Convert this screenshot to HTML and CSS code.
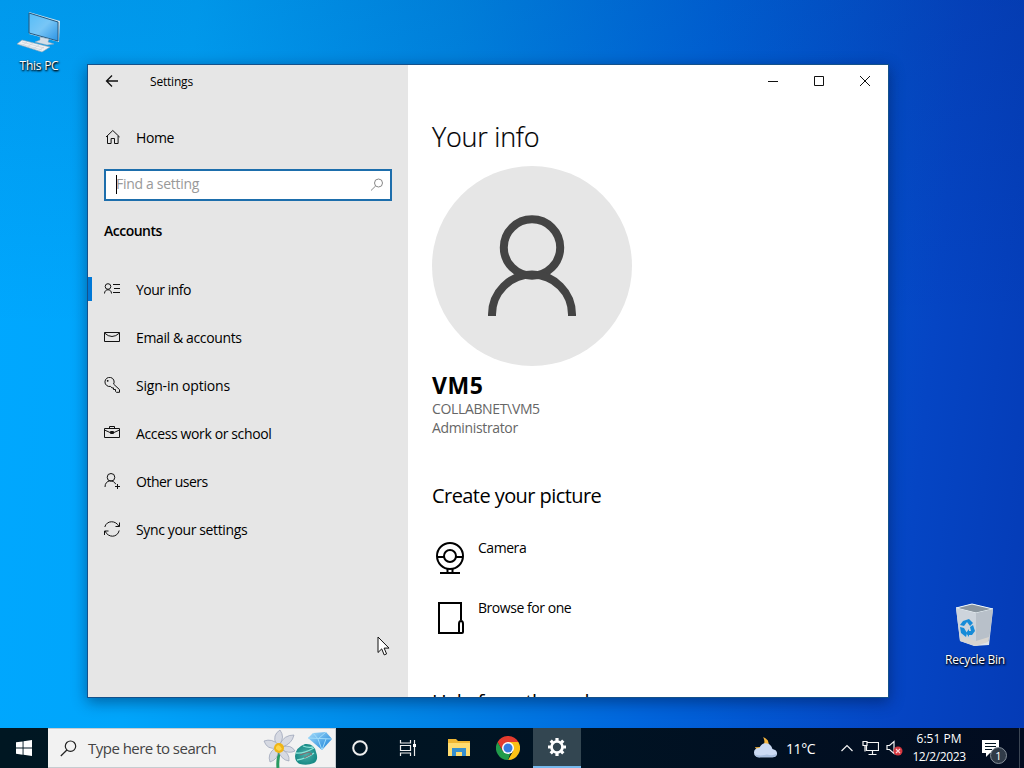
FILE: index.html
```html
<!DOCTYPE html>
<html lang="en">
<head>
<meta charset="utf-8">
<title>Settings</title>
<link rel="stylesheet" href="styles.css">
</head>
<body>
<main class="desktop">
  <div class="shortcut shortcut-pc">
    <svg width="44" height="44" viewBox="0 0 44 44">
      <defs><linearGradient id="screen" x1="0" y1="0" x2="1" y2="1"><stop offset="0" stop-color="#55bdf8"/><stop offset=".5" stop-color="#78c6f6"/><stop offset="1" stop-color="#2b93e4"/></linearGradient></defs>
      <path d="M12 2l31 9-1 21-30-8z" fill="#cfe3ef"/>
      <path d="M12 3l29 9v19l-29-8z" fill="url(#screen)" stroke="#24577c"/>
      <path d="M23 27l9 2-1 3 6 2-7 1-12-3 5-2z" fill="#d5dfe8" stroke="#8ca3b6" stroke-width=".5"/>
      <path d="M5 30l28 7-8 5-25-8z" fill="#edf0f4" stroke="#8fa5b5" stroke-width=".6"/>
      <path d="M5 32l22 6M3 34l22 6M10 32l-5 4M16 33l-6 4M22 35l-6 4M27 37l-6 4" stroke="#c4ccd4" stroke-width=".6"/>
    </svg>
    <span>This PC</span>
  </div>
  <div class="shortcut shortcut-bin">
    <svg width="40" height="44" viewBox="0 0 40 44">
      <path d="M1 5l16-4 21 5-4 36-15 1-14-5z" fill="#dfe4e9"/>
      <path d="M1 5l20 5 17-4-21-5z" fill="#8b969f" stroke="#eff7fb"/>
      <path d="M21 10l17-4-4 32-13 4z" fill="#b8c0c9"/><path d="M1 5l20 5v33L5 38z" fill="#cdd4dc"/>
      <path d="M5 33l16 5 13-4-1 5-12 4-15-5z" fill="#d8d5d0"/>
      <g fill="#168bd8"><path d="M8 18l6-2 4 4-3 3-3-4-3 4-4-1z"/><path d="M5 24l4 1 3 5-1 4-5-4z"/><path d="M18 22l2 6-3 4h-3v2l-3-4 3-4v2h2l-1-4z"/></g>
    </svg>
    <span>Recycle Bin</span>
  </div>

  <section class="window">
    <aside class="sidebar">
      <header class="side-title">
        <svg width="16" height="16" viewBox="0 0 16 16"><path d="M14 8H2.5M8 2.5L2.5 8 8 13.5" class="line arrow"/></svg>
        <span>Settings</span>
      </header>
      <div class="nav-item home">
        <svg width="16" height="16" viewBox="0 0 16 16"><path d="M2 8l6.8-6.5L15.6 8M3.5 7v7.5h3.6v-5h3.4v5h3.6V7" class="line"/></svg>
        <span>Home</span>
      </div>
      <div class="search"><i class="caret"></i><span>Find a setting</span>
        <svg width="14" height="14" viewBox="0 0 14 14"><circle cx="8.5" cy="5" r="4" class="line muted"/><path d="M5.6 8L1 12.5" class="line muted"/></svg>
      </div>
      <h2>Accounts</h2>
      <nav>
        <div class="nav-item selected">
          <svg width="16" height="16" viewBox="0 0 16 16"><circle cx="4" cy="5.5" r="2.8" class="line"/><path d="M.5 12.5c0-5 7-5 7 0M9 3.5h7M10 7.5h6M9 11.5h7" class="line"/></svg>
          <span class="tight">Your info</span></div>
        <div class="nav-item">
          <svg width="16" height="16" viewBox="0 0 16 16"><path d="M.5 3.5h15v9H.5zM.5 4Q8 11 15.5 4" class="line"/></svg>
          <span>Email &amp; accounts</span></div>
        <div class="nav-item">
          <svg width="16" height="16" viewBox="0 0 16 16"><path d="M9.6 7.1A4.6 4.6 0 1 0 6.6 9.4l1.3 1.5h1.6v1.6h2v1.9l1 .9h3v-2.7z" class="line"/><circle cx="3.7" cy="3.8" r=".9"/></svg>
          <span class="loose">Sign-in options</span></div>
        <div class="nav-item">
          <svg width="16" height="16" viewBox="0 0 16 16"><path d="M.5 3.5h15v9H.5zM5.5 3.5v-2h5v2M.5 5l5.5 2.5h4L15.5 5M6.5 6.5h3v2h-3z" class="line"/></svg>
          <span>Access work or school</span></div>
        <div class="nav-item">
          <svg width="16" height="16" viewBox="0 0 16 16"><circle cx="7" cy="4.3" r="3.8" class="line"/><path d="M1 14c0-7.8 9-7.5 10.7-2.8M13.5 11v5M11 13.5h5" class="line"/></svg>
          <span class="tight">Other users</span></div>
        <div class="nav-item">
          <svg width="16" height="16" viewBox="0 0 16 16"><path d="M.8 6C2.5-.8 12-1 15 5.5M15.5 1.5v4h-4M15.2 9.5C13.5 17 4 17 1 10M.5 14v-4h4" class="line"/></svg>
          <span>Sync your settings</span></div>
      </nav>
    </aside>
    <article class="content">
      <div class="controls">
        <svg width="46" height="32" viewBox="0 0 46 32"><path d="M18 16.5h10" class="line"/></svg>
        <svg width="46" height="32" viewBox="0 0 46 32"><path d="M18.5 11.5h9v9h-9z" class="line"/></svg>
        <svg width="46" height="32" viewBox="0 0 46 32"><path d="M18 11l10 10M28 11L18 21" class="line"/></svg>
      </div>
      <h1>Your info</h1>
      <svg class="avatar" width="200" height="200" viewBox="0 0 200 200"><circle cx="100" cy="100" r="100" fill="#e6e6e6"/><circle cx="100" cy="81.5" r="28.2" fill="none" stroke="#444" stroke-width="8"/><path d="M60 150v-1.5a40 40 0 0 1 80 0v1.5" fill="none" stroke="#444" stroke-width="8"/></svg>
      <div class="user">VM5</div>
      <div class="detail">COLLABNET\VM5</div>
      <div class="detail">Administrator</div>
      <h3>Create your picture</h3>
      <div class="action">
        <svg width="36" height="36" viewBox="0 0 36 36" class="bold"><circle cx="18" cy="16" r="13"/><circle cx="18" cy="16" r="6"/><path d="M5 17h7M24 17h7M15.5 28.5v4M20.5 28.5v4M8 33h20"/></svg>
        <span>Camera</span>
      </div>
      <div class="action">
        <svg width="36" height="36" viewBox="0 0 36 36" class="bold"><path d="M29 20V3H7v30h23a1 1 0 0 0 1-1V24c0-4-4-4-4 0v9"/></svg>
        <span>Browse for one</span>
      </div>
      <h3 class="help">Help from the web</h3>
    </article>
  </section>

  <svg class="pointer" width="13" height="20" viewBox="0 0 13 20"><path d="M1 1v15.5l3.7-3.6 2.5 6 2.4-1-2.5-5.8H12z" fill="#fff" stroke="#111"/></svg>
</main>

<footer class="taskbar">
  <div class="start"><svg width="16" height="16" viewBox="0 0 16 16"><path d="M0 2.3l6.6-.9v6.2H0zM7.5 1.2L16 0v7.6H7.5zM0 8.5h6.6v6.2L0 13.8zM7.5 8.5H16V16l-8.5-1.2z" fill="#fff"/></svg></div>
  <div class="task-search">
    <svg width="17" height="17" viewBox="0 0 17 17"><circle cx="10.5" cy="6.2" r="5.2" class="search-line"/><path d="M6.9 10L.8 16" class="search-line"/></svg>
    <span>Type here to search</span>
    <svg class="doodle" width="72" height="40" viewBox="0 0 72 40">
      <defs>
        <linearGradient id="gem" x1="0" y1="0" x2="1" y2="1"><stop offset="0" stop-color="#a5dcfa"/><stop offset="1" stop-color="#147fd8"/></linearGradient>
        <radialGradient id="stone"><stop offset="0" stop-color="#4caea9"/><stop offset="1" stop-color="#188b86"/></radialGradient>
      </defs>
      <path d="M16 22c0 7-2 11-1 18" fill="none" stroke="#299a61" stroke-width="3"/>
      <g fill="#d6d9e2" stroke="#969fb5" stroke-width=".7"><path d="M13 16Q9 7 17 2q5 7 0 14z"/><path d="M17 16Q21 7 31 7q-2 9-12 12z"/><path d="M19 19q9-3 13 4-6 3-13-1z"/><path d="M18 21q9 4 8 12-8-1-11-11z"/><path d="M15 22q1 9-8 12-3-8 5-14z"/><path d="M14 20Q4 22 1 13q8-3 15 4z"/></g>
      <circle cx="16" cy="20" r="5" fill="#efb516"/><path d="M13 19l2-2 2 1 2 3-3 2-3-2z" fill="#ffd54a"/>
      <path d="M32 28q1-9 10-12 9-1 11 8 3 8-2 11-7 3-14 1-5-2-5-8z" fill="url(#stone)"/>
      <path d="M33 25q7 1 18-5M34 32q9-1 17-7M40 18q5 2 10 1" fill="none" stroke="#8de3d9" stroke-width="1.3"/><path d="M37 27l9-3 3 2-8 4" fill="none" stroke="#846d70"/>
      <path d="M45 10l5-5 13-1 6 7-10 11z" fill="url(#gem)"/><path d="M45 10l24 1M50 5l5 6 8-7M55 11l4 11 4-11" fill="none" stroke="#a0dcfa"/>
    </svg>
  </div>
  <div class="task"><svg width="18" height="18" viewBox="0 0 18 18"><circle cx="9" cy="9" r="6.8" fill="none" stroke="#eee" stroke-width="2"/></svg></div>
  <div class="task"><svg width="18" height="16" viewBox="0 0 18 16"><path d="M1.5 0v3h10V0M1.5 16v-3h10v3M1.5 5.5h10v5h-10zM15.5 0v16" fill="none" stroke="#eee" stroke-width="1.2"/><path d="M14 4h3v3h-3z" fill="#fff"/></svg></div>
  <div class="task explorer"><svg width="22" height="20" viewBox="0 0 22 20"><path d="M0 1h8l2 2h12v14H0z" fill="#efb633"/><path d="M0 5h22v13H0z" fill="#ffdc70"/><path d="M4 18v-8h14v8h-4v-4H8v4z" fill="#368fce"/></svg></div>
  <div class="task chrome"><svg width="24" height="24" viewBox="0 0 24 24"><path d="M22.4 6A12 12 0 0 1 12 24l5.2-9L12 6z" fill="#fbc116"/><path d="M12 24A12 12 0 0 1 1.6 6l5.2 9 5.2 3 2.5-1z" fill="#219b4b"/><path d="M1.6 6A12 12 0 0 1 22.4 6H12v6l-5.2 3z" fill="#e33b2e"/><circle cx="12" cy="12" r="6" fill="#fff"/><circle cx="12" cy="12" r="4.5" fill="#377bdf"/></svg></div>
  <div class="task active"><svg width="20" height="20" viewBox="-10 -10 20 20"><circle r="5.5" fill="none" stroke="#fff" stroke-width="2.7"/><g stroke="#fff" stroke-width="3.2"><path d="M0-6v-3M0 6v3M-6 0h-3M6 0h3M4.3-4.3l2-2M4.3 4.3l2 2M-4.3 4.3l-2 2M-4.3-4.3l-2-2"/></g></svg></div>
  <div class="tray">
    <svg class="weather" width="24" height="24" viewBox="0 0 26 24"><path d="M10 0q5 12-9 11 3 6 10 4 7-4 4-11-2-3-5-4z" fill="#f6b63f"/><path d="M6 22q-6 0-6-5t6-5q2-6 8-5 4 0 6 6 5 1 5 5t-5 4z" fill="#cbdaf3"/><path d="M1 19q1 4 6 3h13q4 0 5-4-5 3-11 1-7 2-13 0z" fill="#a9bfdf"/></svg>
    <span class="temp">11°C</span>
    <svg class="chevron" width="12" height="8" viewBox="0 0 12 8"><path d="M.5 7L6 1.5 11.5 7" class="white-line"/></svg>
    <svg class="network" width="17" height="15" viewBox="0 0 17 15"><path d="M5.5 1.5h11v8h-12V5M10.5 9.5v4M6.5 13.5h8M1 .5h4v4H1zM3 4.5v6" class="white-line"/></svg>
    <svg class="sound" width="17" height="16" viewBox="0 0 17 16"><path d="M1 5.5h2.5L8 1.5v12l-4.5-4H1z" class="white-line"/><circle cx="12" cy="11" r="4.5" fill="#d63840"/><path d="M10 9l4 4M14 9l-4 4" stroke="#ffd3d5" stroke-width="1.2"/></svg>
    <div class="clock"><span>6:51 PM</span><span class="date">12/2/2023</span></div>
    <div class="notice"><svg width="17" height="17" viewBox="0 0 17 17"><path d="M0 0h17v13H8l-4 4v-4H0z" fill="#fff"/><path d="M3 3.5h11M3 6.5h11M3 9.5h7" stroke="#001320"/></svg><b>1</b></div>
    <i class="peek"></i>
  </div>
</footer>
</body>
</html>
```
FILE: styles.css
```css
* { box-sizing: border-box; }
body { margin: 0; width: 1024px; height: 768px; overflow: hidden; font-family: "Open Sans", "Noto Sans", sans-serif; font-size: 14px; color: #000; }
svg { display: block; flex: none; }
h1, h2, h3 { margin: 0; font-weight: 400; }
span { white-space: nowrap; }
.desktop { position: relative; height: 728px; overflow: hidden; background: linear-gradient(180deg, rgba(0,20,70,.1), transparent 45%), linear-gradient(96deg, #00a8ff 0%, #00a5fb 18%, #0089e8 42%, #0065dc 65%, #0545c4 88%, #053bb6 100%); }
.shortcut { position: absolute; display: flex; flex-direction: column; align-items: center; width: 76px; color: #fff; font-size: 12px; line-height: 16px; letter-spacing: -.25px; text-shadow: 1px 1px 2px #000, 0 1px 2px #000; }
.shortcut-pc { left: 1px; top: 10px; gap: 4px; }
.shortcut-bin { left: 937px; top: 603px; gap: 5px; }
.window { position: absolute; left: 87px; top: 64px; width: 802px; height: 634px; display: flex; overflow: hidden; border: 1px solid #14518b; box-shadow: 0 4px 14px rgba(0,15,50,.45); background: #fff; }
.sidebar { width: 320px; background: #e6e6e6; flex: none; }
.side-title { height: 32px; display: flex; align-items: center; padding-left: 16px; gap: 30px; font-size: 12px; letter-spacing: -.2px; }
.nav-item { height: 48px; display: flex; align-items: center; padding-left: 16px; gap: 16px; letter-spacing: -.37px; }
.nav-item svg { margin-bottom: 2px; }
.nav-item span { margin-bottom: 2px; }
.nav-item .tight { letter-spacing: -.5px; }
.nav-item .loose { letter-spacing: -.2px; }
.home { margin-top: 17px; }
.selected { background: linear-gradient(#0078d7, #0078d7) 0 11px / 4px 24px no-repeat; }
.search { margin: 7px 16px 0; height: 32px; border: 2px solid #1d6eac; background: #fff; display: flex; align-items: center; padding: 0 6px 2px 10px; color: #999; letter-spacing: -.3px; }
.search span { margin-bottom: 1px; }
.search svg { margin: 2px 0 0 auto; }
.caret { width: 1px; height: 19px; margin-right: -1px; background: #000; }
.sidebar h2 { font-size: 14px; font-weight: 600; line-height: 24px; letter-spacing: -.5px; margin: 18px 16px 23px; }
.line { fill: none; stroke: #111; stroke-width: 1; }
.arrow { stroke-width: 1.3; }
.muted { stroke: #888; }
.content { flex: 1; }
.content > :not(.controls) { margin-left: 24px; }
.controls { display: flex; height: 32px; justify-content: flex-end; }
.content h1 { font-size: 27px; font-weight: 300; line-height: 36px; letter-spacing: -.25px; margin-top: 22px; -webkit-text-stroke: .2px #000; }
.avatar { margin-top: 11px; }
.user { font-size: 23px; line-height: 29px; font-weight: 700; letter-spacing: .5px; margin-top: 5px; }
.detail { line-height: 19px; color: #666; letter-spacing: -.35px; position: relative; top: -1px; }
.content h3 { font-size: 20px; line-height: 28px; letter-spacing: -.57px; margin-top: 44px; }
.action { display: flex; height: 40px; margin-top: 29px; gap: 10px; letter-spacing: -.45px; }
.action svg { margin-top: 1px; }
.action + .action { margin-top: 20px; }
.action span { line-height: 18px; }
.bold { fill: none; stroke: #000; stroke-width: 2; }
.content h3.help { margin-top: 49px; }
.pointer { position: absolute; left: 377px; top: 636px; }
.taskbar { height: 40px; display: flex; color: #fff; background: linear-gradient(90deg, #001722, #001323 55%, #020c20); }
.start, .task { display: flex; align-items: center; justify-content: center; width: 48px; }
.task-search { display: flex; align-items: center; width: 288px; background: #f2f2f2; border: 1px solid #c6ccd0; border-left: 0; color: #444; font-size: 15px; letter-spacing: -.52px; padding-left: 12px; gap: 11px; }
.search-line { fill: none; stroke: #222; stroke-width: 1.2; }
.doodle { margin-left: auto; }
.explorer { width: 51px; padding-left: 3px; }
.chrome { width: 50px; }
.active { background: #334651; border-bottom: 2px solid #76b9ed; }
.tray { margin-left: auto; width: 272px; display: flex; align-items: center; }
.white-line { fill: none; stroke: #f4f4f4; stroke-width: 1.2; }
.weather { margin-left: 2px; }
.temp { width: 30px; margin-left: 8px; letter-spacing: -.4px; }
.chevron { margin-left: 25px; }
.network { margin-left: 9px; }
.sound { margin-left: 7px; }
.clock { width: 68px; margin-left: 2px; display: flex; flex-direction: column; align-items: center; font-size: 12px; line-height: 18px; }
.date { letter-spacing: -.4px; }
.notice { position: relative; margin-left: 9px; }
.notice b { position: absolute; left: 8px; top: 7px; width: 17px; height: 17px; border-radius: 50%; background: #303b48; border: 1px solid #86909a; font-size: 11px; font-weight: 400; line-height: 15px; text-align: center; }
.peek { width: 1px; height: 40px; margin: 0 4px 0 auto; background: #3c4654; }
```
